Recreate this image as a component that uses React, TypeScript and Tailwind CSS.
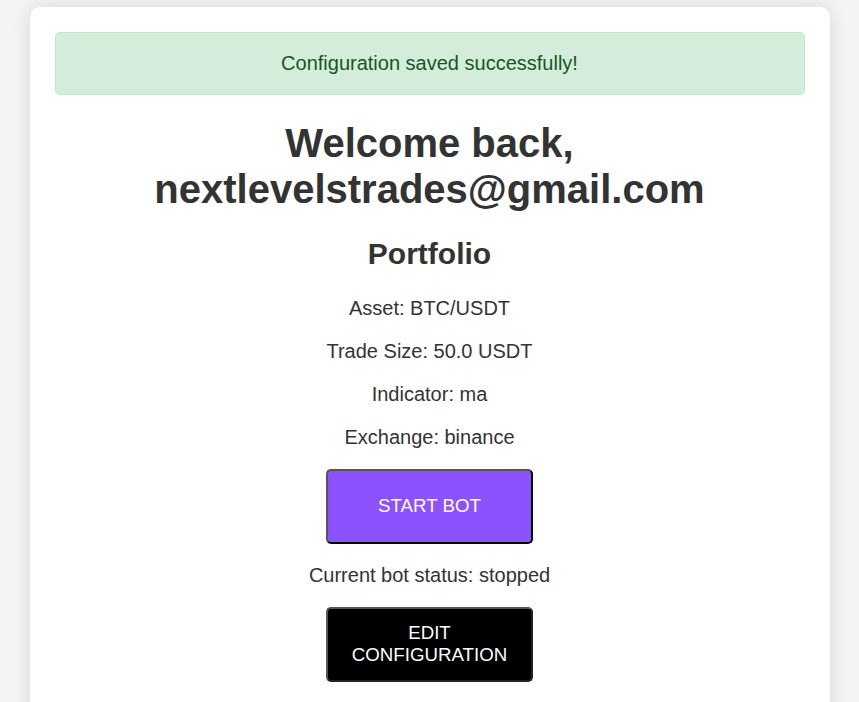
import React from "react";

export default function App() {
  return (
    <div
      className="min-h-[702px] bg-[#f4f4f4] pt-[7px]"
      style={{ fontFamily: '"Liberation Sans", Arial, sans-serif' }}
    >
      <div className="mx-auto w-[800px] rounded-[10px] bg-white p-[25px] text-center text-[#333] shadow-[0_0_20px_rgba(0,0,0,0.12)]">
        <div className="rounded-[5px] border border-[#c3e6cb] bg-[#d4edda] py-[19px] text-[20px] leading-[23px] text-[#155724]">
          Configuration saved successfully!
        </div>
        <h1 className="mt-[25px] text-[40px] font-bold leading-[46px]">
          Welcome back,
          <br />
          nextlevelstrades@gmail.com
        </h1>
        <h2 className="mt-[25px] text-[30px] font-bold leading-[34px]">Portfolio</h2>
        <p className="mt-[26px] text-[20px] leading-[23px]">Asset: BTC/USDT</p>
        <p className="mt-[20px] text-[20px] leading-[23px]">Trade Size: 50.0 USDT</p>
        <p className="mt-[20px] text-[20px] leading-[23px]">Indicator: ma</p>
        <p className="mt-[20px] text-[20px] leading-[23px]">Exchange: binance</p>
        <div className="mt-[20px] flex justify-center">
          <button className="flex h-[75px] w-[207px] items-center justify-center rounded-[5px] border-2 border-t-[#555] border-l-[#555] border-b-black border-r-black bg-[#8c52ff] pb-[2px] text-[18.7px] leading-[22px] text-white">
            START BOT
          </button>
        </div>
        <p className="mt-[20px] text-[20px] leading-[23px]">Current bot status: stopped</p>
        <div className="mt-[20px] flex justify-center">
          <button className="flex h-[75px] w-[207px] items-center justify-center rounded-[5px] border-2 border-t-[#555] border-l-[#555] border-b-[#222] border-r-[#222] bg-black px-[22px] pb-[2px] text-[18.7px] leading-[22px] text-white">
            EDIT CONFIGURATION
          </button>
        </div>
        <div className="h-[30px]" />
      </div>
    </div>
  );
}
